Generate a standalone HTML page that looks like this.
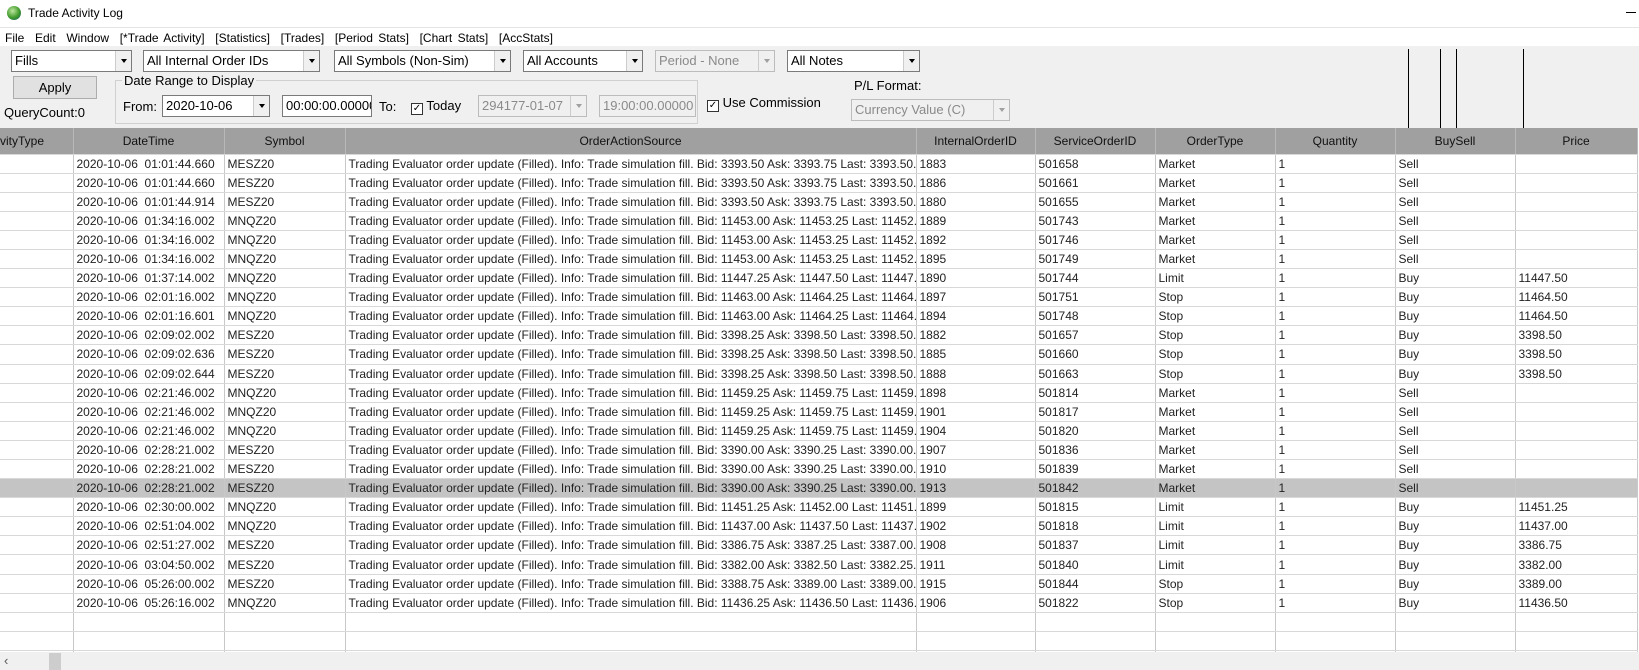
<!DOCTYPE html>
<html><head><meta charset="utf-8"><style>
*{box-sizing:border-box;margin:0;padding:0}
body{width:1639px;height:670px;overflow:hidden;background:#fff;font-family:"Liberation Sans",sans-serif;font-size:12px;color:#000;position:relative}
.a{position:absolute;white-space:nowrap}
.dd{position:absolute;height:22px;background:#fff;border:1px solid #7a7a7a;font-size:13px;line-height:20px;padding-left:3px}
.dd::after{content:"";position:absolute;right:0;top:0;width:15px;height:20px;background:#f0f0f0;border-left:1px solid #ccc}
.dd::before{content:"";position:absolute;right:4px;top:8px;border-left:3.5px solid transparent;border-right:3.5px solid transparent;border-top:4px solid #000;z-index:2}
.dis{background:#f0f0f0;color:#8a8a8a;border-color:#bcbcbc}
.dis::before{border-top-color:#a0a0a0}
.tb{position:absolute;height:22px;background:#fff;border:1px solid #7a7a7a;font-size:13px;line-height:20px;padding-left:3px;overflow:hidden}
.cb{display:inline-block;width:12px;height:12px;border:1px solid #333;background:#fff;font-size:10px;line-height:10px;text-align:center;vertical-align:-1px}
table{position:absolute;left:0;top:128px;border-collapse:collapse;table-layout:fixed;width:1637px}
td,th{border-right:1px solid #c8c8c8;border-bottom:1px solid #d8d8d8;height:19.1px;padding:0 3px;overflow:hidden;white-space:nowrap;font-size:12px;color:#222;text-align:left;font-weight:normal}
th{background:#a0a0a0;height:26px;text-align:center;color:#111;border-right:1px solid #b8b8b8}
tr.sel td{background:#c4c4c4}
</style></head><body>
<div class="a" style="left:0;top:0;width:1639px;height:28px;background:#fff;border-bottom:1px solid #e4e4e4"></div>
<div class="a" style="left:7px;top:6px;width:14px;height:14px;border-radius:50%;background:radial-gradient(circle at 40% 35%,#bfe6a0,#3f9a2a 55%,#1f5b7a)"></div>
<div class="a" style="left:28px;top:6px;font-size:12px">Trade Activity Log</div>
<div class="a" style="left:1626px;top:12px;width:10px;height:1px;background:#000"></div>
<div class="a" style="left:5px;top:31px;font-size:12px;word-spacing:2px">File&nbsp; Edit&nbsp; Window&nbsp; [*Trade Activity]&nbsp; [Statistics]&nbsp; [Trades]&nbsp; [Period Stats]&nbsp; [Chart Stats]&nbsp; [AccStats]</div>
<div class="a" style="left:0;top:46px;width:1639px;height:82px;background:#f0f0f0"></div>
<div class="dd" style="left:11px;top:50px;width:121px">Fills</div>
<div class="dd" style="left:143px;top:50px;width:177px">All Internal Order IDs</div>
<div class="dd" style="left:334px;top:50px;width:177px">All Symbols (Non-Sim)</div>
<div class="dd" style="left:523px;top:50px;width:120px">All Accounts</div>
<div class="dd dis" style="left:655px;top:50px;width:120px">Period - None</div>
<div class="dd" style="left:787px;top:50px;width:133px">All Notes</div>
<div class="a" style="left:13px;top:76px;width:84px;height:23px;border:1px solid #adadad;background:#e1e1e1;text-align:center;line-height:21px;font-size:13px">Apply</div>
<div class="a" style="left:4px;top:105px;font-size:13px">QueryCount:0</div>
<div class="a" style="left:115px;top:80px;width:583px;height:44px;border:1px solid #d0d0d0"></div>
<div class="a" style="left:122px;top:73px;background:#f0f0f0;padding:0 2px;font-size:13px">Date Range to Display</div>
<div class="a" style="left:123px;top:99px;font-size:13px">From:</div>
<div class="dd" style="left:162px;top:95px;width:108px">2020-10-06</div>
<div class="tb" style="left:282px;top:95px;width:90px">00:00:00.00000</div>
<div class="a" style="left:379px;top:99px;font-size:13px">To:</div>
<div class="a" style="left:411px;top:98px;font-size:13px"><span class="cb">✓</span> Today</div>
<div class="dd dis" style="left:478px;top:95px;width:109px">294177-01-07</div>
<div class="tb" style="left:599px;top:95px;width:97px;background:#f0f0f0;color:#8a8a8a;border-color:#bcbcbc">19:00:00.00000</div>
<div class="a" style="left:707px;top:95px;font-size:13px"><span class="cb">✓</span> Use Commission</div>
<div class="a" style="left:854px;top:78px;font-size:13px">P/L Format:</div>
<div class="dd dis" style="left:851px;top:99px;width:159px">Currency Value (C)</div>
<div class="a" style="left:1408px;top:49px;width:1px;height:79px;background:#000"></div>
<div class="a" style="left:1440px;top:49px;width:1px;height:79px;background:#000"></div>
<div class="a" style="left:1456px;top:49px;width:1px;height:79px;background:#000"></div>
<div class="a" style="left:1523px;top:49px;width:1px;height:79px;background:#000"></div>
<table>
<colgroup><col style="width:73px"><col style="width:151px"><col style="width:121px"><col style="width:571px"><col style="width:119px"><col style="width:120px"><col style="width:120px"><col style="width:120px"><col style="width:120px"><col style="width:122px"></colgroup>
<tr><th style="text-align:left;padding-left:0">vityType</th><th>DateTime</th><th>Symbol</th><th>OrderActionSource</th><th>InternalOrderID</th><th>ServiceOrderID</th><th>OrderType</th><th>Quantity</th><th>BuySell</th><th>Price</th></tr>
<tr><td></td><td>2020-10-06&nbsp; 01:01:44.660</td><td>MESZ20</td><td>Trading Evaluator order update (Filled). Info: Trade simulation fill. Bid: 3393.50 Ask: 3393.75 Last: 3393.50. Te</td><td>1883</td><td>501658</td><td>Market</td><td>1</td><td>Sell</td><td></td></tr>
<tr><td></td><td>2020-10-06&nbsp; 01:01:44.660</td><td>MESZ20</td><td>Trading Evaluator order update (Filled). Info: Trade simulation fill. Bid: 3393.50 Ask: 3393.75 Last: 3393.50. Te</td><td>1886</td><td>501661</td><td>Market</td><td>1</td><td>Sell</td><td></td></tr>
<tr><td></td><td>2020-10-06&nbsp; 01:01:44.914</td><td>MESZ20</td><td>Trading Evaluator order update (Filled). Info: Trade simulation fill. Bid: 3393.50 Ask: 3393.75 Last: 3393.50. Te</td><td>1880</td><td>501655</td><td>Market</td><td>1</td><td>Sell</td><td></td></tr>
<tr><td></td><td>2020-10-06&nbsp; 01:34:16.002</td><td>MNQZ20</td><td>Trading Evaluator order update (Filled). Info: Trade simulation fill. Bid: 11453.00 Ask: 11453.25 Last: 11452.75</td><td>1889</td><td>501743</td><td>Market</td><td>1</td><td>Sell</td><td></td></tr>
<tr><td></td><td>2020-10-06&nbsp; 01:34:16.002</td><td>MNQZ20</td><td>Trading Evaluator order update (Filled). Info: Trade simulation fill. Bid: 11453.00 Ask: 11453.25 Last: 11452.75</td><td>1892</td><td>501746</td><td>Market</td><td>1</td><td>Sell</td><td></td></tr>
<tr><td></td><td>2020-10-06&nbsp; 01:34:16.002</td><td>MNQZ20</td><td>Trading Evaluator order update (Filled). Info: Trade simulation fill. Bid: 11453.00 Ask: 11453.25 Last: 11452.75</td><td>1895</td><td>501749</td><td>Market</td><td>1</td><td>Sell</td><td></td></tr>
<tr><td></td><td>2020-10-06&nbsp; 01:37:14.002</td><td>MNQZ20</td><td>Trading Evaluator order update (Filled). Info: Trade simulation fill. Bid: 11447.25 Ask: 11447.50 Last: 11447.50</td><td>1890</td><td>501744</td><td>Limit</td><td>1</td><td>Buy</td><td>11447.50</td></tr>
<tr><td></td><td>2020-10-06&nbsp; 02:01:16.002</td><td>MNQZ20</td><td>Trading Evaluator order update (Filled). Info: Trade simulation fill. Bid: 11463.00 Ask: 11464.25 Last: 11464.50</td><td>1897</td><td>501751</td><td>Stop</td><td>1</td><td>Buy</td><td>11464.50</td></tr>
<tr><td></td><td>2020-10-06&nbsp; 02:01:16.601</td><td>MNQZ20</td><td>Trading Evaluator order update (Filled). Info: Trade simulation fill. Bid: 11463.00 Ask: 11464.25 Last: 11464.50</td><td>1894</td><td>501748</td><td>Stop</td><td>1</td><td>Buy</td><td>11464.50</td></tr>
<tr><td></td><td>2020-10-06&nbsp; 02:09:02.002</td><td>MESZ20</td><td>Trading Evaluator order update (Filled). Info: Trade simulation fill. Bid: 3398.25 Ask: 3398.50 Last: 3398.50. Te</td><td>1882</td><td>501657</td><td>Stop</td><td>1</td><td>Buy</td><td>3398.50</td></tr>
<tr><td></td><td>2020-10-06&nbsp; 02:09:02.636</td><td>MESZ20</td><td>Trading Evaluator order update (Filled). Info: Trade simulation fill. Bid: 3398.25 Ask: 3398.50 Last: 3398.50. Te</td><td>1885</td><td>501660</td><td>Stop</td><td>1</td><td>Buy</td><td>3398.50</td></tr>
<tr><td></td><td>2020-10-06&nbsp; 02:09:02.644</td><td>MESZ20</td><td>Trading Evaluator order update (Filled). Info: Trade simulation fill. Bid: 3398.25 Ask: 3398.50 Last: 3398.50. Te</td><td>1888</td><td>501663</td><td>Stop</td><td>1</td><td>Buy</td><td>3398.50</td></tr>
<tr><td></td><td>2020-10-06&nbsp; 02:21:46.002</td><td>MNQZ20</td><td>Trading Evaluator order update (Filled). Info: Trade simulation fill. Bid: 11459.25 Ask: 11459.75 Last: 11459.75</td><td>1898</td><td>501814</td><td>Market</td><td>1</td><td>Sell</td><td></td></tr>
<tr><td></td><td>2020-10-06&nbsp; 02:21:46.002</td><td>MNQZ20</td><td>Trading Evaluator order update (Filled). Info: Trade simulation fill. Bid: 11459.25 Ask: 11459.75 Last: 11459.75</td><td>1901</td><td>501817</td><td>Market</td><td>1</td><td>Sell</td><td></td></tr>
<tr><td></td><td>2020-10-06&nbsp; 02:21:46.002</td><td>MNQZ20</td><td>Trading Evaluator order update (Filled). Info: Trade simulation fill. Bid: 11459.25 Ask: 11459.75 Last: 11459.75</td><td>1904</td><td>501820</td><td>Market</td><td>1</td><td>Sell</td><td></td></tr>
<tr><td></td><td>2020-10-06&nbsp; 02:28:21.002</td><td>MESZ20</td><td>Trading Evaluator order update (Filled). Info: Trade simulation fill. Bid: 3390.00 Ask: 3390.25 Last: 3390.00. Te</td><td>1907</td><td>501836</td><td>Market</td><td>1</td><td>Sell</td><td></td></tr>
<tr><td></td><td>2020-10-06&nbsp; 02:28:21.002</td><td>MESZ20</td><td>Trading Evaluator order update (Filled). Info: Trade simulation fill. Bid: 3390.00 Ask: 3390.25 Last: 3390.00. Te</td><td>1910</td><td>501839</td><td>Market</td><td>1</td><td>Sell</td><td></td></tr>
<tr class="sel"><td></td><td>2020-10-06&nbsp; 02:28:21.002</td><td>MESZ20</td><td>Trading Evaluator order update (Filled). Info: Trade simulation fill. Bid: 3390.00 Ask: 3390.25 Last: 3390.00. Te</td><td>1913</td><td>501842</td><td>Market</td><td>1</td><td>Sell</td><td></td></tr>
<tr><td></td><td>2020-10-06&nbsp; 02:30:00.002</td><td>MNQZ20</td><td>Trading Evaluator order update (Filled). Info: Trade simulation fill. Bid: 11451.25 Ask: 11452.00 Last: 11451.50</td><td>1899</td><td>501815</td><td>Limit</td><td>1</td><td>Buy</td><td>11451.25</td></tr>
<tr><td></td><td>2020-10-06&nbsp; 02:51:04.002</td><td>MNQZ20</td><td>Trading Evaluator order update (Filled). Info: Trade simulation fill. Bid: 11437.00 Ask: 11437.50 Last: 11437.25</td><td>1902</td><td>501818</td><td>Limit</td><td>1</td><td>Buy</td><td>11437.00</td></tr>
<tr><td></td><td>2020-10-06&nbsp; 02:51:27.002</td><td>MESZ20</td><td>Trading Evaluator order update (Filled). Info: Trade simulation fill. Bid: 3386.75 Ask: 3387.25 Last: 3387.00. Fil</td><td>1908</td><td>501837</td><td>Limit</td><td>1</td><td>Buy</td><td>3386.75</td></tr>
<tr><td></td><td>2020-10-06&nbsp; 03:04:50.002</td><td>MESZ20</td><td>Trading Evaluator order update (Filled). Info: Trade simulation fill. Bid: 3382.00 Ask: 3382.50 Last: 3382.25. Fil</td><td>1911</td><td>501840</td><td>Limit</td><td>1</td><td>Buy</td><td>3382.00</td></tr>
<tr><td></td><td>2020-10-06&nbsp; 05:26:00.002</td><td>MESZ20</td><td>Trading Evaluator order update (Filled). Info: Trade simulation fill. Bid: 3388.75 Ask: 3389.00 Last: 3389.00. Fil</td><td>1915</td><td>501844</td><td>Stop</td><td>1</td><td>Buy</td><td>3389.00</td></tr>
<tr><td></td><td>2020-10-06&nbsp; 05:26:16.002</td><td>MNQZ20</td><td>Trading Evaluator order update (Filled). Info: Trade simulation fill. Bid: 11436.25 Ask: 11436.50 Last: 11436.50</td><td>1906</td><td>501822</td><td>Stop</td><td>1</td><td>Buy</td><td>11436.50</td></tr>
<tr><td></td><td></td><td></td><td></td><td></td><td></td><td></td><td></td><td></td><td></td></tr>
<tr><td></td><td></td><td></td><td></td><td></td><td></td><td></td><td></td><td></td><td></td></tr>
<tr><td></td><td></td><td></td><td></td><td></td><td></td><td></td><td></td><td></td><td></td></tr>
</table>
<div class="a" style="left:0;top:652px;width:1639px;height:18px;background:#f0f0f0"></div>
<div class="a" style="left:4px;top:653px;font-size:13px;color:#555">‹</div>
<div class="a" style="left:49px;top:653px;width:12px;height:17px;background:#cdcdcd"></div>
</body></html>
